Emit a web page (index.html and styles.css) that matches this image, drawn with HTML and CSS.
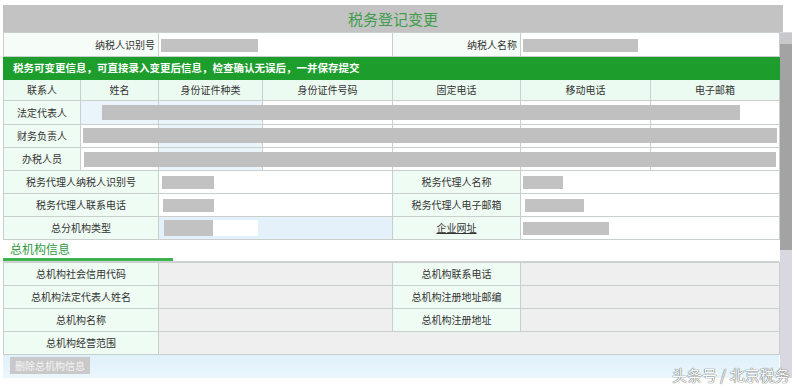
FILE: index.html
```html
<!DOCTYPE html>
<html lang="zh-CN">
<head>
    <meta charset="UTF-8">
    <title>税务登记变更</title>
    <link rel="stylesheet" href="styles.css">
</head>
<body>
    <div class="frame">
        <div class="title-bar">税务登记变更</div>
        <div class="main">
            <div class="content">
                <table class="grid">
                    <colgroup>
                        <col class="c1"><col class="c2"><col class="c3"><col class="c4">
                        <col class="c5"><col class="c6"><col class="c7">
                    </colgroup>
                    <tr class="r24">
                        <td colspan="2" class="lbl lbl-right">纳税人识别号</td>
                        <td colspan="2" class="val"><span class="mask m-id"></span></td>
                        <td class="lbl lbl-right">纳税人名称</td>
                        <td colspan="2" class="val"><span class="mask m-name"></span></td>
                    </tr>
                    <tr class="r23">
                        <td colspan="7" class="notice">税务可变更信息，可直接录入变更后信息，检查确认无误后，一并保存提交</td>
                    </tr>
                    <tr class="r21 head">
                        <td>联系人</td>
                        <td>姓名</td>
                        <td>身份证件种类</td>
                        <td>身份证件号码</td>
                        <td>固定电话</td>
                        <td>移动电话</td>
                        <td>电子邮箱</td>
                    </tr>
                    <tr class="r24">
                        <td class="lbl">法定代表人</td>
                        <td class="inp tint"><span class="redact rd-1"></span></td>
                        <td class="inp tint"></td>
                        <td class="inp"></td>
                        <td class="inp"></td>
                        <td class="inp"></td>
                        <td class="inp"></td>
                    </tr>
                    <tr class="r23">
                        <td class="lbl">财务负责人</td>
                        <td class="inp"><span class="redact rd-2"></span></td>
                        <td class="inp tint"></td>
                        <td class="inp"></td>
                        <td class="inp"></td>
                        <td class="inp"></td>
                        <td class="inp"></td>
                    </tr>
                    <tr class="r23">
                        <td class="lbl">办税人员</td>
                        <td class="inp"><span class="redact rd-3"></span></td>
                        <td class="inp tint"></td>
                        <td class="inp"></td>
                        <td class="inp"></td>
                        <td class="inp"></td>
                        <td class="inp"></td>
                    </tr>
                    <tr class="r23">
                        <td colspan="2" class="lbl">税务代理人纳税人识别号</td>
                        <td colspan="2" class="val"><span class="mask m-a1"></span></td>
                        <td class="lbl">税务代理人名称</td>
                        <td colspan="2" class="val"><span class="mask m-a2"></span></td>
                    </tr>
                    <tr class="r23">
                        <td colspan="2" class="lbl">税务代理人联系电话</td>
                        <td colspan="2" class="val"><span class="mask m-a3"></span></td>
                        <td class="lbl">税务代理人电子邮箱</td>
                        <td colspan="2" class="val"><span class="mask m-a4"></span></td>
                    </tr>
                    <tr class="r23">
                        <td colspan="2" class="lbl">总分机构类型</td>
                        <td colspan="2" class="val val-tint"><span class="mask m-a5"></span><span class="select"></span></td>
                        <td class="lbl"><span class="link">企业网址</span></td>
                        <td colspan="2" class="val"><span class="mask m-a6"></span></td>
                    </tr>
                </table>

                <div class="section">
                    <div class="section-title">总机构信息</div>
                </div>

                <table class="grid grid-hq">
                    <colgroup>
                        <col class="c1"><col class="c2"><col class="c3"><col class="c4">
                        <col class="c5"><col class="c6"><col class="c7">
                    </colgroup>
                    <tr class="r23">
                        <td colspan="2" class="lbl">总机构社会信用代码</td>
                        <td colspan="2" class="ro"></td>
                        <td class="lbl">总机构联系电话</td>
                        <td colspan="2" class="ro"></td>
                    </tr>
                    <tr class="r23">
                        <td colspan="2" class="lbl">总机构法定代表人姓名</td>
                        <td colspan="2" class="ro"></td>
                        <td class="lbl">总机构注册地址邮编</td>
                        <td colspan="2" class="ro"></td>
                    </tr>
                    <tr class="r23">
                        <td colspan="2" class="lbl">总机构名称</td>
                        <td colspan="2" class="ro"></td>
                        <td class="lbl">总机构注册地址</td>
                        <td colspan="2" class="ro"></td>
                    </tr>
                    <tr class="r23">
                        <td colspan="2" class="lbl">总机构经营范围</td>
                        <td colspan="5" class="ro"></td>
                    </tr>
                </table>

                <div class="actions">
                    <button class="btn-del">删除总机构信息</button>
                </div>
            </div>
            <div class="scrollbar">
                <div class="scroll-up"></div>
                <div class="scroll-thumb"></div>
            </div>
        </div>
    </div>
    <div class="watermark">头条号 / 北京税务</div>
</body>
</html>
```

FILE: styles.css
```css
body {
    margin: 0;
    padding: 5px 0 0 3px;
    background-color: #fff;
    font-family: "Noto Sans CJK SC", "Noto Sans", sans-serif;
    font-size: 10px;
    color: #333;
}
.frame {
    width: 790px;
}
.title-bar {
    width: 780px;
    height: 27px;
    line-height: 27px;
    background-color: #c3c3c3;
    color: #3f9d4c;
    font-size: 15px;
    text-align: center;
}
.main {
    display: flex;
    gap: 1px;
}
.content {
    width: 776px;
}
.grid {
    width: 776px;
    border-collapse: collapse;
    table-layout: fixed;
}
.grid td {
    border: 1px solid #c9cfcc;
    padding: 0;
    line-height: 14px;
    text-align: center;
    white-space: nowrap;
}
.c1 { width: 77px; }
.c2 { width: 78px; }
.c3 { width: 104px; }
.c4 { width: 130px; }
.c5 { width: 128px; }
.c6 { width: 130px; }
.c7 { width: 129px; }

.r24 { height: 24px; }
.r23 { height: 23px; }
.r21 { height: 21px; }

.lbl {
    background-color: #effcf4;
}
.lbl-right {
    text-align: right !important;
    padding-right: 3px !important;
    background-color: #f6fdf8;
}
.val {
    background-color: #fff;
    text-align: left !important;
    padding-left: 2px !important;
}
.val-tint {
    background-color: #e4f1fa;
}
.mask {
    display: inline-block;
    vertical-align: middle;
    height: 13px;
    background-color: #c2c2c2;
}
.m-id { width: 97px; }
.m-name { width: 115px; }
.m-a1 { width: 52px; margin-left: 1px; }
.m-a2 { width: 40px; }
.m-a3 { width: 51px; margin-left: 2px; }
.m-a4 { width: 59px; margin-left: 2px; }
.m-a5 { width: 49px; height: 16px; margin-left: 3px; }
.m-a6 { width: 86px; }
.select {
    display: inline-block;
    vertical-align: middle;
    width: 45px;
    height: 16px;
    background-color: #fff;
}
.link {
    text-decoration: underline;
}

.notice {
    background-color: #1d9d2c;
    color: #fff;
    font-weight: bold;
    font-size: 10.5px;
    text-align: left !important;
    padding-left: 9px !important;
    border-color: #1d9d2c !important;
}
.head td {
    background-color: #ecfbf1;
}
.inp {
    background-color: #fff;
    position: relative;
}
.tint {
    background-color: #e9f4fb;
}
.redact {
    position: absolute;
    z-index: 2;
    height: 15px;
    background-color: #c0c0c0;
}
.rd-1 { left: 21px; top: 4px; width: 638px; }
.rd-2 { left: 2px; top: 3px; width: 694px; }
.rd-3 { left: 3px; top: 4px; width: 692px; }

.section {
    height: 21px;
    border-bottom: 1px solid #d3d3d3;
}
.section-title {
    width: 163px;
    padding-left: 7px;
    height: 18px;
    line-height: 17px;
    color: #2f9a44;
    font-size: 12px;
    border-bottom: 3px solid #3cb34f;
}
.ro {
    background-color: #efefef;
}

.actions {
    height: 23px;
    padding: 2px 0 0 7px;
    box-sizing: border-box;
    background: linear-gradient(#dff1fa, #eaf6fc);
}
.btn-del {
    display: block;
    width: 80px;
    height: 17px;
    padding: 0;
    border: none;
    background-color: #c9c9c9;
    color: #f4f4f4;
    font-family: inherit;
    font-size: 10px;
}

.scrollbar {
    width: 12px;
    height: 346px;
    background-color: #d8d9e0;
}
.scroll-up {
    height: 11px;
    margin-top: 1px;
    background-color: #c8c8cc;
}
.scroll-thumb {
    height: 206px;
    background-color: #a3a3a3;
}

.watermark {
    position: absolute;
    left: 672px;
    top: 365px;
    line-height: 20px;
    white-space: nowrap;
    font-size: 15px;
    color: #fafafa;
    text-shadow: 0 0 1px #555, 0 0 1px #555;
}
```
